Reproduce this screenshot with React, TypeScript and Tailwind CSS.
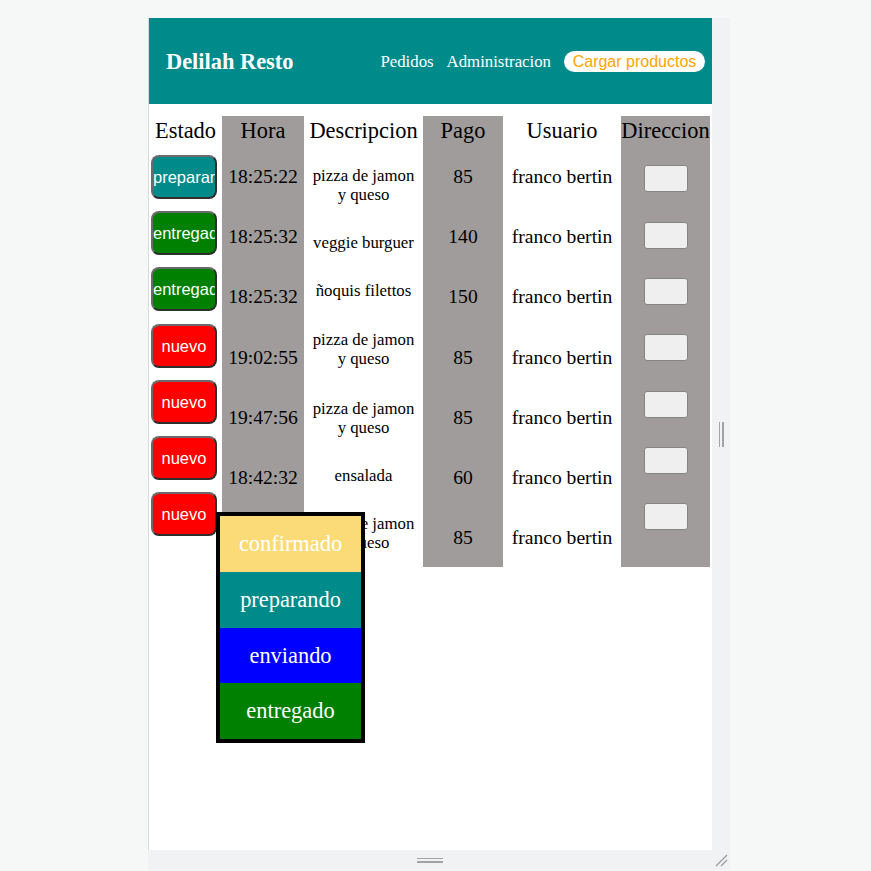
import React from "react";

const estados = [
  { label: "preparando", bg: "bg-[#008b8b]" },
  { label: "entregado", bg: "bg-[#008000]" },
  { label: "entregado", bg: "bg-[#008000]" },
  { label: "nuevo", bg: "bg-[#ff0000]" },
  { label: "nuevo", bg: "bg-[#ff0000]" },
  { label: "nuevo", bg: "bg-[#ff0000]" },
  { label: "nuevo", bg: "bg-[#ff0000]" },
];

const horas = ["18:25:22", "18:25:32", "18:25:32", "19:02:55", "19:47:56", "18:42:32", "18:42:32"];
const pagos = ["85", "140", "150", "85", "85", "60", "85"];

const descs: { lines: string[]; mt: string }[] = [
  { lines: ["pizza de jamon", "y queso"], mt: "mt-[19.4px]" },
  { lines: ["veggie burguer"], mt: "mt-[28.7px]" },
  { lines: ["ñoquis filettos"], mt: "mt-[29px]" },
  { lines: ["pizza de jamon", "y queso"], mt: "mt-[29.4px]" },
  { lines: ["pizza de jamon", "y queso"], mt: "mt-[30.4px]" },
  { lines: ["ensalada"], mt: "mt-[28.4px]" },
  { lines: ["pizza de jamon", "y queso"], mt: "mt-[28.7px]" },
];

function Header({ children }: { children: React.ReactNode }) {
  return (
    <div className="h-[30.5px] leading-[30px] text-[22.4px] text-center whitespace-nowrap text-black">
      {children}
    </div>
  );
}

function Cell({ children }: { children: React.ReactNode }) {
  return (
    <div className="h-[60.3px] shrink-0 pt-[1px] flex items-center justify-center text-[19.6px] leading-[22px] whitespace-nowrap text-black">
      {children}
    </div>
  );
}

export default function App() {
  return (
    <div className="w-[871px] h-[871px] bg-[#f6f7f7] pt-[18px] pl-[148px] font-['Liberation_Serif',serif] overflow-hidden">
      <div className="flex">
        <div className="relative w-[564px] h-[832px] bg-white border-l border-[#d9d9d9]">
          <header className="h-[86px] bg-[#008b8b] flex items-center justify-between pl-[17px] pr-[7px]">
            <div className="text-white font-bold text-[22.4px] pt-[2px] whitespace-nowrap">Delilah Resto</div>
            <nav className="flex items-center gap-[13px] text-white text-[16.8px]">
              <span className="pt-[2px] whitespace-nowrap">Pedidos</span>
              <span className="pt-[2px] whitespace-nowrap">Administracion</span>
              <span className="h-[21px] w-[141px] pt-[1px] bg-white rounded-full flex items-center justify-center text-[#ffa500] text-[16px] font-['Liberation_Sans',sans-serif] whitespace-nowrap">
                Cargar productos
              </span>
            </nav>
          </header>

          <div className="mt-[12px] flex h-[451px]">
            {/* Estado */}
            <div className="w-[73px] h-full">
              <Header>Estado</Header>
              {estados.map((e, i) => (
                <div key={i} className="h-[56.2px] pt-[8.5px] pl-[2px] flex justify-start">
                  <div
                    className={`w-[66px] h-[44px] ${e.bg} rounded-[8px] border-2 border-[#6a6a6a] border-r-[#2e2e2e] border-b-[#2e2e2e] overflow-hidden text-white text-[16.5px] leading-[40px] text-center whitespace-nowrap font-['Liberation_Sans',sans-serif]`}
                  >
                    {e.label}
                  </div>
                </div>
              ))}
            </div>

            {/* Hora */}
            <div className="w-[82px] h-full bg-[#a09c9b] flex flex-col">
              <Header>Hora</Header>
              {horas.map((h, i) => (
                <Cell key={i}>{h}</Cell>
              ))}
            </div>

            {/* Descripcion */}
            <div className="w-[119px] h-full flex flex-col">
              <Header>Descripcion</Header>
              {descs.map((d, i) => (
                <div key={i} className={`${d.mt} text-[16.8px] leading-[19.3px] text-center text-black`}>
                  {d.lines.map((l, j) => (
                    <div key={j} className="whitespace-nowrap">{l}</div>
                  ))}
                </div>
              ))}
            </div>

            {/* Pago */}
            <div className="w-[80px] h-full bg-[#a09c9b] flex flex-col">
              <Header>Pago</Header>
              {pagos.map((p, i) => (
                <Cell key={i}>{p}</Cell>
              ))}
            </div>

            {/* Usuario */}
            <div className="w-[118px] h-full flex flex-col">
              <Header>Usuario</Header>
              {pagos.map((_, i) => (
                <Cell key={i}>franco bertin</Cell>
              ))}
            </div>

            {/* Direccion */}
            <div className="w-[89px] h-full bg-[#a09c9b]">
              <Header>Direccion</Header>
              {pagos.map((_, i) => (
                <div key={i} className="h-[56.33px] pt-[18.8px] flex justify-center">
                  <div className="w-[44px] h-[27px] bg-[#efefef] border border-[#858585] rounded-[3px]" />
                </div>
              ))}
            </div>
          </div>

          {/* Dropdown */}
          <div className="absolute left-[67px] top-[494px] w-[149px] h-[231px] border-4 border-black flex flex-col text-white text-[22.4px]">
            <div className="flex-1 bg-[#fadb78] flex items-center justify-center">confirmado</div>
            <div className="flex-1 bg-[#008b8b] flex items-center justify-center">preparando</div>
            <div className="flex-1 bg-[#0000ff] flex items-center justify-center">enviando</div>
            <div className="flex-1 bg-[#008000] flex items-center justify-center">entregado</div>
          </div>
        </div>

        {/* Right resize strip */}
        <div className="w-[18px] h-[832px] bg-[#f1f2f4] flex items-center justify-center gap-[2px]">
          <div className="w-[1.5px] h-[25px] bg-[#a3a3a3]" />
          <div className="w-[1.5px] h-[25px] bg-[#a3a3a3]" />
        </div>
      </div>

      {/* Bottom resize strip */}
      <div className="flex w-[582px] h-[20px] bg-[#f1f2f4]">
        <div className="w-[564px] h-full flex flex-col items-center justify-center gap-[2px]">
          <div className="w-[26px] h-[1.5px] bg-[#a3a3a3]" />
          <div className="w-[26px] h-[1.5px] bg-[#a3a3a3]" />
        </div>
        <div className="w-[18px] h-full flex items-center justify-center">
          <svg width="14" height="14" viewBox="0 0 14 14">
            <line x1="2" y1="13" x2="13" y2="2" stroke="#9a9a9a" strokeWidth="1.3" />
            <line x1="7" y1="13" x2="13" y2="7" stroke="#9a9a9a" strokeWidth="1.3" />
          </svg>
        </div>
      </div>
    </div>
  );
}
